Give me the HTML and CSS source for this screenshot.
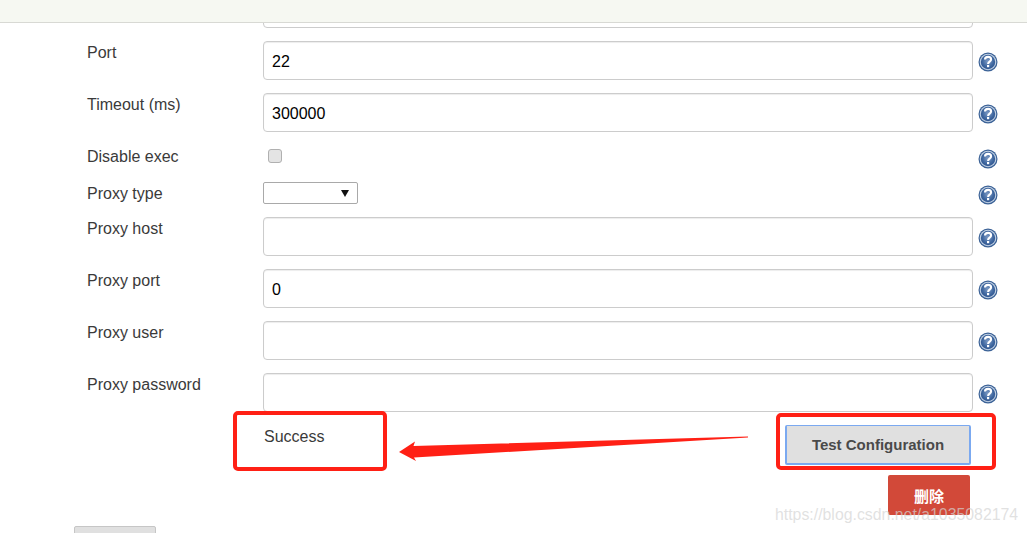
FILE: index.html
```html
<!DOCTYPE html>
<html lang="en">
<head>
    <meta charset="UTF-8">
    <meta name="viewport" content="width=device-width, initial-scale=1.0">
    <title>SSH Server Configuration</title>
    <link rel="stylesheet" href="styles.css">
</head>
<body>

    <svg class="icon-defs" width="0" height="0" aria-hidden="true">
        <defs>
            <radialGradient id="helpFill" cx="50%" cy="45%" r="55%">
                <stop offset="0%" stop-color="#7f9cc6"/>
                <stop offset="70%" stop-color="#3f679f"/>
                <stop offset="100%" stop-color="#2f5590"/>
            </radialGradient>
            <symbol id="helpIcon" viewBox="0 0 20 20">
                <circle cx="10" cy="10" r="9.5" fill="#3a6196"/>
                <circle cx="10" cy="10" r="8.3" fill="#c3d2e4"/>
                <circle cx="10" cy="10" r="7.2" fill="url(#helpFill)"/>
                <path d="M7 7.6c0-1.8 1.4-2.7 3.1-2.7s3 1 3 2.5c0 2.2-3 2.2-3 4.5" fill="none" stroke="#fff" stroke-width="2.1"/>
                <rect x="9" y="13" width="2.2" height="2.2" fill="#fff"/>
            </symbol>
        </defs>
    </svg>

    <!-- Top bar -->
    <div class="top-bar"></div>

    <div class="scroll-area">
        <div class="form">
            <div class="row">
                <span class="label"></span>
                <input class="text-input" type="text">
            </div>

            <div class="row">
                <span class="label">Port</span>
                <input class="text-input" type="text" value="22">
                <svg class="help"><use href="#helpIcon"/></svg>
            </div>

            <div class="row">
                <span class="label">Timeout (ms)</span>
                <input class="text-input" type="text" value="300000">
                <svg class="help"><use href="#helpIcon"/></svg>
            </div>

            <div class="row row-check">
                <span class="label">Disable exec</span>
                <span class="checkbox"></span>
                <svg class="help"><use href="#helpIcon"/></svg>
            </div>

            <div class="row row-select">
                <span class="label">Proxy type</span>
                <span class="select"><span class="select-arrow"></span></span>
                <svg class="help"><use href="#helpIcon"/></svg>
            </div>

            <div class="row">
                <span class="label">Proxy host</span>
                <input class="text-input" type="text">
                <svg class="help"><use href="#helpIcon"/></svg>
            </div>

            <div class="row">
                <span class="label">Proxy port</span>
                <input class="text-input" type="text" value="0">
                <svg class="help"><use href="#helpIcon"/></svg>
            </div>

            <div class="row">
                <span class="label">Proxy user</span>
                <input class="text-input" type="text">
                <svg class="help"><use href="#helpIcon"/></svg>
            </div>

            <div class="row">
                <span class="label">Proxy password</span>
                <input class="text-input" type="text">
                <svg class="help"><use href="#helpIcon"/></svg>
            </div>

            <!-- Test result and buttons -->
            <div class="test-row">
                <span class="test-result">Success</span>
                <button class="test-button">Test Configuration</button>
            </div>

            <div class="delete-row">
                <button class="delete-button">删除</button>
            </div>

            <button class="add-button"></button>
        </div>
    </div>

    <!-- Annotations drawn over the screenshot -->
    <div class="mark mark-result"></div>
    <div class="mark mark-button"></div>
    <svg class="arrow" width="1027" height="533" viewBox="0 0 1027 533">
        <path d="M399 452 L415 441.5 L413.5 446 L748 436.6 L748 437.6 L414 457.5 L416 461 Z" fill="#ff2015"/>
    </svg>
    <div class="watermark">https://blog.csdn.net/a1035082174</div>

</body>
</html>
```

FILE: styles.css
```css
/* body */
body {
    font-family: 'Liberation Sans', Arial, sans-serif;
    font-size: 16px;
    color: #3a3a3a;
    margin: 0;
    height: 533px;
    overflow: hidden;
    background-color: #fff;
}

.icon-defs {
    display: block;
    height: 0;
}

/* Top bar */
.top-bar {
    height: 22px;
    background-color: #f6f8f2;
    border-bottom: 1px solid #d8d9d4;
}

/* Form */
.scroll-area {
    height: 510px;
    overflow: hidden;
}

.form {
    margin-top: -34px;
    padding-left: 74px;
}

.row {
    display: grid;
    grid-template-columns: 176px 710px 25px;
    column-gap: 0;
    height: 39px;
    margin-bottom: 13px;
    padding-left: 13px;
}

.row-check {
    height: 24px;
}

.row-check .help {
    margin-top: 4px;
}

.row-select {
    height: 22px;
}

.label {
    line-height: 24px;
}

.text-input {
    box-sizing: border-box;
    width: 710px;
    height: 39px;
    padding: 2px 8px 0;
    font-family: inherit;
    font-size: 16px;
    color: #000;
    background-color: #fff;
    border: 1px solid #ccc;
    border-radius: 4px;
    box-shadow: inset 0 1px 1px rgba(0, 0, 0, 0.075);
}

.help {
    width: 20px;
    height: 20px;
    align-self: center;
    justify-self: end;
    margin-top: 2px;
}

.checkbox {
    box-sizing: border-box;
    display: block;
    width: 14px;
    height: 14px;
    margin: 4px 0 0 5px;
    background-color: #e4e4e4;
    border: 1px solid #b0b0b0;
    border-radius: 3px;
}

.select {
    box-sizing: border-box;
    display: flex;
    align-items: center;
    justify-content: flex-end;
    width: 95px;
    height: 22px;
    padding-right: 8px;
    background-color: #fff;
    border: 1px solid #a9a9a9;
    border-radius: 2px;
}

.select-arrow {
    width: 0;
    height: 0;
    border-left: 4px solid transparent;
    border-right: 4px solid transparent;
    border-top: 7px solid #111;
}

/* Test row */
.test-row {
    display: flex;
    justify-content: space-between;
    width: 897px;
    height: 40px;
    padding-left: 190px;
    box-sizing: border-box;
    margin-bottom: 10px;
}

.test-result {
    line-height: 24px;
}

.test-button {
    box-sizing: border-box;
    width: 186px;
    height: 40px;
    padding-bottom: 2px;
    font-family: inherit;
    font-size: 15px;
    font-weight: bold;
    color: #4a4a4a;
    background-color: #e0e0e0;
    border: 2px solid #7ba9f0;
    border-top-width: 1px;
    border-radius: 2px;
}

.delete-row {
    display: flex;
    justify-content: flex-end;
    width: 896px;
    margin-bottom: 11px;
}

.delete-button {
    width: 82px;
    height: 40px;
    font-family: 'Liberation Sans', 'Noto Sans CJK SC', sans-serif;
    font-size: 15px;
    font-weight: bold;
    color: #fff;
    background-color: #d24939;
    border: none;
    border-radius: 2px;
}

.add-button {
    display: block;
    width: 82px;
    height: 40px;
    background-color: #e0e0e0;
    border: 1px solid #c6c6c6;
    border-radius: 2px;
}

/* Annotations */
.mark {
    position: absolute;
    box-sizing: border-box;
    border: 4px solid #ff2015;
    border-radius: 5px;
}

.mark-result {
    left: 233px;
    top: 411px;
    width: 154px;
    height: 60px;
}

.mark-button {
    left: 776px;
    top: 413px;
    width: 220px;
    height: 57px;
}

.arrow {
    position: absolute;
    left: 0;
    top: 0;
    pointer-events: none;
}

.watermark {
    position: absolute;
    left: 775px;
    top: 505px;
    font-size: 15.85px;
    line-height: 20px;
    color: rgba(212, 212, 212, 0.7);
    white-space: nowrap;
}
```
